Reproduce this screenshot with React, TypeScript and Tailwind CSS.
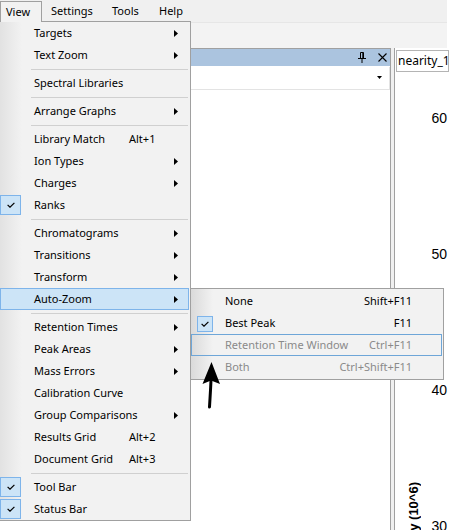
import clsx from 'clsx'

type Item = {
  label?: string
  shortcut?: string
  sub?: boolean
  checked?: boolean
  active?: boolean
  sep?: boolean
}

const viewItems: Item[] = [
  { label: 'Targets', sub: true },
  { label: 'Text Zoom', sub: true },
  { sep: true },
  { label: 'Spectral Libraries' },
  { sep: true },
  { label: 'Arrange Graphs', sub: true },
  { sep: true },
  { label: 'Library Match', shortcut: 'Alt+1' },
  { label: 'Ion Types', sub: true },
  { label: 'Charges', sub: true },
  { label: 'Ranks', checked: true },
  { sep: true },
  { label: 'Chromatograms', sub: true },
  { label: 'Transitions', sub: true },
  { label: 'Transform', sub: true },
  { label: 'Auto-Zoom', sub: true, active: true },
  { sep: true },
  { label: 'Retention Times', sub: true },
  { label: 'Peak Areas', sub: true },
  { label: 'Mass Errors', sub: true },
  { label: 'Calibration Curve' },
  { label: 'Group Comparisons', sub: true },
  { label: 'Results Grid', shortcut: 'Alt+2' },
  { label: 'Document Grid', shortcut: 'Alt+3' },
  { sep: true },
  { label: 'Tool Bar', checked: true },
  { label: 'Status Bar', checked: true },
]

const zoomItems = [
  { label: 'None', shortcut: 'Shift+F11' },
  { label: 'Best Peak', shortcut: 'F11', checked: true },
  { label: 'Retention Time Window', shortcut: 'Ctrl+F11', disabled: true, hover: true },
  { label: 'Both', shortcut: 'Ctrl+Shift+F11', disabled: true },
]

function Tick() {
  return (
    <svg width="8" height="6" viewBox="0 0 8 6">
      <path d="M0.6 2.8 L3 5.2 L7.4 0.8" fill="none" stroke="#000" strokeWidth="1.2" />
    </svg>
  )
}

function SubArrow() {
  return (
    <svg width="4" height="7" viewBox="0 0 4 7">
      <path d="M0 0 L4 3.5 L0 7 Z" fill="#000" />
    </svg>
  )
}

function ViewMenu() {
  return (
    <div className="absolute left-0 top-[21px] z-10 w-[191px] border-y border-r border-[#a0a0a0] bg-[#f2f2f2]">
      <div className="pointer-events-none absolute inset-y-0 left-0 w-[22px] bg-gradient-to-r from-[#e2e2e2] to-transparent" />
      {viewItems.map((it, i) =>
        it.sep ? (
          <div key={i} className="flex h-[6px] items-center">
            <div className="ml-[31px] mr-[2px] h-px flex-1 bg-[#d0d0d0]" />
          </div>
        ) : (
          <div
            key={i}
            className={clsx(
              'relative flex h-[22px] w-[189px] items-center border',
              it.active ? 'border-[#7eb4ea] bg-[#cce4f7]' : 'border-transparent'
            )}
          >
            <div className="flex w-[33px] shrink-0 items-center">
              {it.checked && (
                <div className="-ml-px flex h-[20px] w-[21px] items-center justify-center border border-[#7eb4ea] bg-[#cce4f7]">
                  <Tick />
                </div>
              )}
            </div>
            <div className="w-[95px] shrink-0 whitespace-nowrap">{it.label}</div>
            <div className="w-[45px] shrink-0 whitespace-nowrap">{it.shortcut}</div>
            {it.sub && <SubArrow />}
          </div>
        )
      )}
    </div>
  )
}

function AutoZoomMenu() {
  return (
    <div className="absolute left-[190px] top-[288px] z-10 w-[254px] border border-[#a0a0a0] bg-[#f2f2f2] py-px">
      <div className="pointer-events-none absolute inset-y-0 left-0 w-[22px] bg-gradient-to-r from-[#dadada] to-transparent" />
      {zoomItems.map((it) => (
        <div
          key={it.label}
          className={clsx(
            'relative mr-px flex h-[22px] items-center border pr-[29px]',
            it.hover ? 'border-[#6ea6d8]' : 'border-transparent',
            it.disabled ? 'text-[#8a8a8a]' : 'text-black'
          )}
        >
          <div className="flex w-[33px] shrink-0 items-center pl-[5px]">
            {it.checked && (
              <div className="mt-[2px] flex h-[16px] w-[16px] items-center justify-center border border-[#7eb4ea] bg-[#cce4f7]">
                <Tick />
              </div>
            )}
          </div>
          <div className="flex-1 whitespace-nowrap">{it.label}</div>
          <div className="whitespace-nowrap">{it.shortcut}</div>
        </div>
      ))}
    </div>
  )
}

export default function App() {
  return (
    <div className="relative h-[530px] w-[456px] overflow-hidden bg-white font-['Noto_Sans','Open_Sans',sans-serif] text-[11px] text-black">
      {/* menu bar + toolbar */}
      <div className="flex h-[48px]">
        <div className="flex w-[447px] flex-col bg-[#f0f0f0]">
          <div className="flex h-[22px]">
            <div className="relative z-20 mt-px flex h-[21px] w-[42px] items-center border border-b-0 border-[#a0a0a0] bg-[#f2f2f2] pl-[5px]">
              View
            </div>
            <div className="flex w-[61px] items-center pl-[9px]">Settings</div>
            <div className="flex w-[47px] items-center pl-[9px]">Tools</div>
            <div className="flex items-center pl-[9px]">Help</div>
          </div>
          <div className="flex-1 border-t border-[#e6e6e6] bg-[#f3f3f3]" />
        </div>
        <div className="flex-1 bg-white" />
      </div>

      {/* docked panels */}
      <div className="flex h-[482px]">
        <div className="flex w-[391px] flex-col border-r border-[#a0a0a0] bg-white">
          <div className="flex h-[18px] items-center justify-end gap-[12px] border-t border-[#a0a0a0] bg-[#abc4df] pr-[3px]">
            <svg width="8" height="11" viewBox="0 0 8 11">
              <path d="M2.5 0.5 H5.5 V6 M2.5 0.5 V6 M4.8 0.5 V6" fill="none" stroke="#000" strokeWidth="1" />
              <path d="M0 6.5 H8 M4 6.5 V11" fill="none" stroke="#000" strokeWidth="1" />
            </svg>
            <svg width="9" height="9" viewBox="0 0 9 9">
              <path d="M0.5 0.5 L8.5 8.5 M8.5 0.5 L0.5 8.5" fill="none" stroke="#000" strokeWidth="1.1" />
            </svg>
          </div>
          <div className="flex h-[24px] items-center justify-end border-b border-[#e3e3e3]">
            <svg width="5" height="3" viewBox="0 0 5 3" className="mr-[7px]">
              <path d="M0 0 H5 L2.5 3 Z" fill="#000" />
            </svg>
            <div className="h-[22px] w-px bg-[#e3e3e3]" />
          </div>
          <div className="flex-1" />
        </div>
        <div className="w-[3px] bg-[#f0f0f0]" />
        <div className="relative flex-1 border-l border-[#a0a0a0] bg-white">
          <div className="ml-px mt-[2px] flex h-[22px] w-[53px] items-center overflow-hidden whitespace-nowrap border border-[#b4b4b4] pl-px text-[12px]">
            nearity_18
          </div>
          <div className="absolute right-[9px] top-[62px] font-['Liberation_Sans',sans-serif] text-[14px] leading-[16px]">60</div>
          <div className="absolute right-[9px] top-[198px] font-['Liberation_Sans',sans-serif] text-[14px] leading-[16px]">50</div>
          <div className="absolute right-[9px] top-[334px] font-['Liberation_Sans',sans-serif] text-[14px] leading-[16px]">40</div>
          <div className="absolute right-[9px] top-[470px] font-['Liberation_Sans',sans-serif] text-[14px] leading-[16px]">30</div>
          <div className="absolute left-[11px] top-[434px] rotate-180 whitespace-nowrap font-['Liberation_Sans',sans-serif] text-[13px] font-bold leading-[15px] [writing-mode:vertical-rl]">
            Intensity (10^6)
          </div>
        </div>
      </div>

      <ViewMenu />
      <AutoZoomMenu />

      {/* annotation arrow */}
      <svg className="absolute left-[198px] top-[360px] z-30" width="28" height="50" viewBox="0 0 28 50">
        <path d="M13.5 2 L4.5 24 L13 20.5 L22 24 Z" fill="#000" />
        <path d="M13 20 C12.6 30 12 38 11.5 47" fill="none" stroke="#000" strokeWidth="3" strokeLinecap="round" />
      </svg>
    </div>
  )
}
